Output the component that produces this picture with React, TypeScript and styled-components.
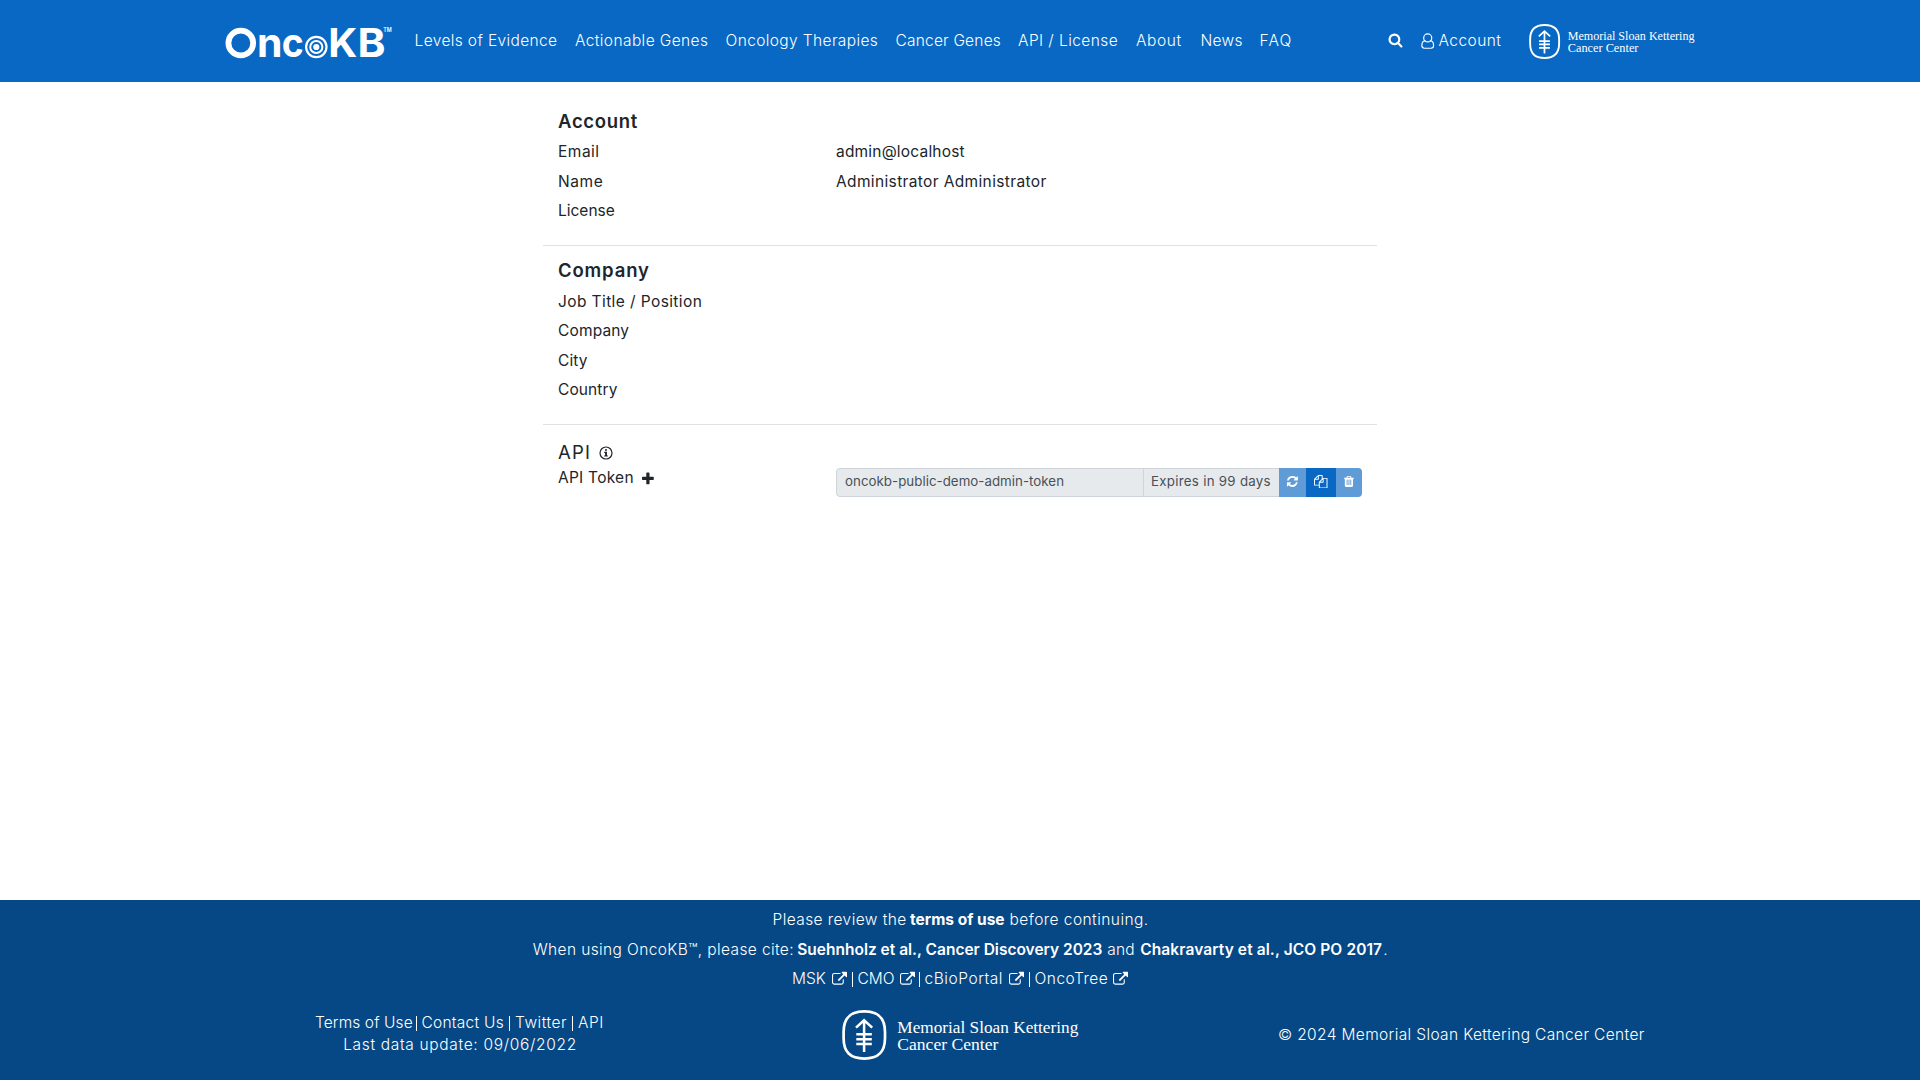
import React from 'react';
import styled, { createGlobalStyle } from 'styled-components';

const Global = createGlobalStyle`
  *, *::before, *::after { box-sizing: border-box; }
  html, body { margin: 0; padding: 0; }
  body { background: #fff; color: #212529; font: 400 15.5px/1.5 Inter, "Open Sans", sans-serif; }
  a { color: inherit; text-decoration: none; }
`;

const Page = styled.div`
  height: 1080px;
  display: flex;
  flex-direction: column;
  overflow: hidden;
`;

/* Text whose tracking and slot width vary with the label. */
const Text = styled.span<{ $w?: number; $ls?: number; $bold?: number }>`
  display: inline-block;
  white-space: nowrap;
  flex: none;
  width: ${(p) => (p.$w ? `${p.$w}px` : 'auto')};
  letter-spacing: ${(p) => p.$ls ?? 0.3}px;
  font-weight: ${(p) => p.$bold ?? 'inherit'};
`;

const Icon = styled.svg<{ $size: number }>`
  display: block;
  flex: none;
  width: ${(p) => p.$size}px;
  height: ${(p) => p.$size}px;
  fill: currentColor;
`;

/* ---------- header ---------- */
const Header = styled.header`
  height: 82px;
  flex: none;
  padding: 0 225px 0 224px;
  display: flex;
  align-items: center;
  background: #0968c3;
  color: #fff;
  font-weight: 300;
`;
const Brand = styled.svg`
  display: block;
  flex: none;
  width: 170px;
  height: 60px;
  margin-right: 20.5px;
  overflow: visible;
  fill: #fff;
  font-family: Inter, sans-serif;
  font-weight: 700;
`;
const Nav = styled.nav`
  display: flex;
  flex: 1;
`;
const Tools = styled.div`
  display: flex;
  align-items: center;
  color: #fff;
`;
const AccountLink = styled.a`
  display: flex;
  align-items: center;
  gap: 1.5px;
  margin: 0 26.5px 0 18px;
`;
const MskMark = styled.svg<{ $width: number }>`
  display: block;
  flex: none;
  width: ${(p) => p.$width}px;
  height: ${(p) => (p.$width * 50) / 237}px;
  overflow: visible;
  font-family: "Liberation Serif", serif;
  fill: #fff;
  ${Tools} & { margin-top: 1px; }
`;

/* ---------- account page ---------- */
const Main = styled.main`
  flex: 1;
  width: 834px;
  margin: 0 auto;
`;
const Section = styled.section<{ $h: number; $top: number }>`
  height: ${(p) => p.$h}px;
  padding: ${(p) => p.$top}px 15px 0;
  border-bottom: 1px solid #dfe1e4;
  &:last-child { border-bottom: 0; }
`;
const Heading = styled.h5<{ $h?: number; $light?: boolean }>`
  margin: 0;
  height: ${(p) => p.$h ?? 31}px;
  display: flex;
  align-items: center;
  font-size: 18.5px;
  font-weight: ${(p) => (p.$light ? 400 : 600)};
`;
const Row = styled.div`
  display: grid;
  grid-template-columns: 278px 1fr;
  align-items: center;
  height: 29.5px;
`;
const TokenRow = styled(Row)`
  align-items: start;
  height: 29px;
`;
const TokenLabel = styled.div`
  display: flex;
  align-items: center;
  gap: 7px;
  line-height: 20px;
`;
const Group = styled.div`
  display: flex;
  width: 526px;
  height: 29px;
  overflow: hidden;
  border-radius: 4px;
  font-size: 13.3px;
  color: #495057;
`;
const Field = styled.div<{ $w: number; $pad: number; $first?: boolean }>`
  flex: none;
  width: ${(p) => p.$w}px;
  padding: 0 0 ${(p) => (p.$first ? 2 : 1)}px ${(p) => p.$pad}px;
  display: flex;
  align-items: center;
  background: #e7eaed;
  border: 1px solid #ced4da;
  border-right: 0;
  border-radius: ${(p) => (p.$first ? '4px 0 0 4px' : 0)};
`;
const IconButton = styled.button<{ $w: number; $on?: boolean }>`
  flex: none;
  width: ${(p) => p.$w}px;
  padding: 0 0 2px;
  border: 0;
  display: flex;
  align-items: center;
  justify-content: center;
  color: #fff;
  background: ${(p) => (p.$on ? '#0968c3' : '#5f9bd7')};
`;

/* ---------- footer ---------- */
const Footer = styled.footer`
  flex: none;
  height: 180px;
  padding-top: 5px;
  background: #064885;
  color: #fff;
  font-weight: 300;
`;
const Line = styled.div`
  height: 29.6px;
  display: flex;
  justify-content: center;
  align-items: center;
`;
const Bar = styled.i<{ $l: number; $r: number }>`
  flex: none;
  width: 1px;
  height: 15px;
  background: #fff;
  margin: 1px ${(p) => p.$r}px 0 ${(p) => p.$l}px;
`;
const Bottom = styled.div`
  display: grid;
  grid-template-columns: 527px 436px 1fr;
  align-items: center;
  height: 50px;
  margin-top: 16px;
  padding-left: 315px;
`;
const Legal = styled.div`
  width: 290px;
  line-height: 22px;
  padding-bottom: 1px;
`;
const LegalLine = styled.div`
  display: flex;
  justify-content: center;
  align-items: center;
  height: 22px;
`;

const P = {
  search: 'M1216 832q0-185-131.5-316.5t-316.5-131.5-316.5 131.5-131.5 316.5 131.5 316.5 316.5 131.5 316.5-131.5 131.5-316.5zm512 832q0 52-38 90t-90 38q-54 0-90-38l-343-342q-179 124-399 124-143 0-273.5-55.5t-225-150-150-225-55.5-273.5 55.5-273.5 150-225 225-150 273.5-55.5 273.5 55.5 225 150 150 225 55.5 273.5q0 220-124 399l343 343q37 37 37 90z',
  link: 'M1472 992v320q0 119-84.5 203.5t-203.5 84.5h-832q-119 0-203.5-84.5t-84.5-203.5v-832q0-119 84.5-203.5t203.5-84.5h704q14 0 23 9t9 23v64q0 14-9 23t-23 9h-704q-66 0-113 47t-47 113v832q0 66 47 113t113 47h832q66 0 113-47t47-113v-320q0-14 9-23t23-9h64q14 0 23 9t9 23zm384-864v512q0 26-19 45t-45 19-45-19l-176-176-652 652q-10 10-23 10t-23-10l-114-114q-10-10-10-23t10-23l652-652-176-176q-19-19-19-45t19-45 45-19h512q26 0 45 19t19 45z',
  plus: 'M1600 736v192q0 40-28 68t-68 28h-416v416q0 40-28 68t-68 28h-192q-40 0-68-28t-28-68v-416h-416q-40 0-68-28t-28-68v-192q0-40 28-68t68-28h416v-416q0-40 28-68t68-28h192q40 0 68 28t28 68v416h416q40 0 68 28t28 68z',
  refresh: 'M1639 1056q0 5-1 7-64 268-268 434.5t-478 166.5q-146 0-282.5-55t-243.5-157l-129 129q-19 19-45 19t-45-19-19-45v-448q0-26 19-45t45-19h448q26 0 45 19t19 45-19 45l-137 137q71 66 161 102t187 36q134 0 250-65t186-179q11-17 53-117 8-23 30-23h192q13 0 22.5 9.5t9.5 22.5zm25-800v448q0 26-19 45t-45 19h-448q-26 0-45-19t-19-45 19-45l138-138q-148-137-349-137-134 0-250 65t-186 179q-11 17-53 117-8 23-30 23h-199q-13 0-22.5-9.5t-9.5-22.5v-7q65-268 270-434.5t480-166.5q146 0 284 55.5t245 156.5l130-129q19-19 45-19t45 19 19 45z',
  files: 'M1696 384q40 0 68 28t28 68v1216q0 40-28 68t-68 28h-960q-40 0-68-28t-28-68v-288h-544q-40 0-68-28t-28-68v-672q0-40 20-88t48-76l408-408q28-28 76-48t88-20h416q40 0 68 28t28 68v328q68-40 128-40h416zm-544 213l-299 299h299v-299zm-640-384l-299 299h299v-299zm196 647l316-316v-416h-384v416q0 40-28 68t-68 28h-416v640h512v-256q0-40 20-88t48-76zm956 804v-1152h-384v416q0 40-28 68t-68 28h-416v640h896z',
  trash: 'M704 1376v-704q0-14-9-23t-23-9h-64q-14 0-23 9t-9 23v704q0 14 9 23t23 9h64q14 0 23-9t9-23zm256 0v-704q0-14-9-23t-23-9h-64q-14 0-23 9t-9 23v704q0 14 9 23t23 9h64q14 0 23-9t9-23zm256 0v-704q0-14-9-23t-23-9h-64q-14 0-23 9t-9 23v704q0 14 9 23t23 9h64q14 0 23-9t9-23zm-544-992h448l-48-117q-7-9-17-11h-317q-10 2-17 11zm928 32v64q0 14-9 23t-23 9h-96v948q0 83-47 143.5t-113 60.5h-832q-66 0-113-58.5t-47-141.5v-952h-96q-14 0-23-9t-9-23v-64q0-14 9-23t23-9h309l70-167q15-37 54-63t79-26h320q40 0 79 26t54 63l70 167h309q14 0 23 9t9 23z',
};

const Glyph = ({ d, size, box = '0 0 1792 1792' }: { d: string; size: number; box?: string }) => (
  <Icon $size={size} viewBox={box}><path d={d} /></Icon>
);
const External = () => <Glyph d={P.link} size={15} box="64 -32 1792 1792" />;

const UserIcon = () => (
  <Icon $size={16} viewBox="0 0 15 15">
    <path d="M4.3 7.3C2 7.3.8 9.500.8 11.800c0 1.600.9 2.500 2.400 2.500h6.200c1.500 0 2.400-.9 2.400-2.500 0-2.300-1.200-4.500-3.500-4.500" fill="none" stroke="currentColor" strokeWidth="1.1" />
    <circle cx="6.300" cy="4.600" r="3.800" fill="none" stroke="currentColor" strokeWidth="1.1" />
  </Icon>
);
const InfoIcon = () => (
  <Icon $size={14} viewBox="0 0 14 14">
    <circle cx="7" cy="7" r="6" fill="none" stroke="currentColor" strokeWidth="1.2" />
    <path d="M6 3.2h2v1.6H6zM5.2 5.800H8v3.700h.9v1.100H5.200V9.500h.9V6.900h-.9z" />
  </Icon>
);
const Msk = ({ width }: { width: number }) => (
  <MskMark $width={width} viewBox="0 0 237 50">
    <path d="M22.3 1.4C36.5 1.4 43 8 43 22v6c0 14-6.500 20.600-20.700 20.600S1.600 42 1.600 28v-6C1.600 8 8.100 1.400 22.300 1.400z" fill="none" stroke="#fff" strokeWidth="2.7" />
    <path d="M22.100 42V10.500M14 17.700l8.100-7.400 8.100 7.400M14.300 24.300h15.500M14.300 29.200h15.500M14.300 34.100h15.500" fill="none" stroke="#fff" strokeWidth="2.5" />
    <text x="55.300" y="22.600" fontSize="17.700" textLength="181" lengthAdjust="spacingAndGlyphs">Memorial Sloan Kettering</text>
    <text x="55.300" y="39.700" fontSize="17.700" textLength="101" lengthAdjust="spacingAndGlyphs">Cancer Center</text>
  </MskMark>
);

const NAV: [string, number, number][] = [
  ['Levels of Evidence', 160.5, 0.38],
  ['Actionable Genes', 150.5, 0.4],
  ['Oncology Therapies', 170, 0.38],
  ['Cancer Genes', 122.5, 0.2],
  ['API / License', 118, 0.44],
  ['About', 64.5, 0.6],
  ['News', 59, 0.3],
  ['FAQ', 40, 1.2],
];
const ACCOUNT: [string, number, string, number][] = [
  ['Email', 0.5, 'admin@localhost', 0.2],
  ['Name', 0.6, 'Administrator Administrator', 0.36],
  ['License', 0, '', 0],
];
const COMPANY: [string, number][] = [
  ['Job Title / Position', 0.4],
  ['Company', 0.15],
  ['City', 0.1],
  ['Country', 0.1],
];

export default function App() {
  return (
    <Page>
      <Global />
      <Header>
        <Brand viewBox="0 -12 170 60">
          <circle cx="16.800" cy="20" r="12.400" fill="none" stroke="#fff" strokeWidth="5.800" />
          <text x="33" y="34.300" fontSize="40.500" textLength="25.500" lengthAdjust="spacingAndGlyphs">n</text>
          <text x="57.800" y="34.300" fontSize="40.500" textLength="22" lengthAdjust="spacingAndGlyphs">c</text>
          <g fill="none" stroke="#fff">
            <circle cx="92.300" cy="24" r="10.200" strokeWidth="2.200" />
            <circle cx="92.300" cy="24" r="6.100" strokeWidth="2" />
          </g>
          <circle cx="92.300" cy="24" r="3.100" />
          <text x="104.200" y="34.300" fontSize="39.500" textLength="29" lengthAdjust="spacingAndGlyphs">K</text>
          <text x="133.500" y="34.300" fontSize="39.500" textLength="28" lengthAdjust="spacingAndGlyphs">B</text>
          <text x="159.300" y="9.300" fontSize="5.500" fontWeight="600" textLength="8.500" lengthAdjust="spacingAndGlyphs">TM</text>
        </Brand>
        <Nav>
          {NAV.map(([label, w, ls]) => (
            <a key={label} href="#"><Text $w={w} $ls={ls}>{label}</Text></a>
          ))}
        </Nav>
        <Tools>
          <Glyph d={P.search} size={15} box="0 64 1792 1792" />
          <AccountLink href="#"><UserIcon /><Text $ls={0.45} $w={64}>Account</Text></AccountLink>
          <Msk width={166} />
        </Tools>
      </Header>

      <Main>
        <Section $h={164} $top={24}>
          <Heading><Text $ls={0.7}>Account</Text></Heading>
          {ACCOUNT.map(([k, ls, v, vls]) => (
            <Row key={k}><Text $ls={ls}>{k}</Text><Text $ls={vls}>{v}</Text></Row>
          ))}
        </Section>
        <Section $h={179} $top={9.5}>
          <Heading><Text $ls={0.85}>Company</Text></Heading>
          {COMPANY.map(([k, ls]) => (
            <Row key={k}><Text $ls={ls}>{k}</Text></Row>
          ))}
        </Section>
        <Section $h={90} $top={13}>
          <Heading $light $h={30}><Text $w={41} $ls={1.2}>API</Text><InfoIcon /></Heading>
          <TokenRow>
            <TokenLabel><Text $w={77} $ls={0.25}>API Token</Text><Glyph d={P.plus} size={15} box="192 -60 1792 1792" /></TokenLabel>
            <Group>
              <Field $w={307} $pad={8} $first><Text $ls={0.03}>oncokb-public-demo-admin-token</Text></Field>
              <Field $w={136} $pad={7}><Text $ls={0.28}>Expires in 99 days</Text></Field>
              <IconButton $w={27}><Glyph d={P.refresh} size={12.8} /></IconButton>
              <IconButton $w={30} $on><Glyph d={P.files} size={13.5} /></IconButton>
              <IconButton $w={26}><Glyph d={P.trash} size={12.8} box="64 0 1792 1792" /></IconButton>
            </Group>
          </TokenRow>
        </Section>
      </Main>

      <Footer>
        <Line>
          <Text $w={137.5} $ls={0.42}>Please review the</Text>
          <Text $w={99.5} $ls={0} $bold={700}>terms of use</Text>
          <Text $w={138} $ls={0.45}>before continuing.</Text>
        </Line>
        <Line>
          <Text $w={264.5} $ls={0.38}>When using OncoKB™, please cite:</Text>
          <Text $w={310} $ls={0} $bold={600}>Suehnholz et al., Cancer Discovery 2023</Text>
          <Text $w={33} $ls={0.2}>and</Text>
          <Text $w={243} $ls={0.1} $bold={600}>Chakravarty et al., JCO PO 2017</Text>
          <Text $w={4}>.</Text>
        </Line>
        <Line>
          <Text $w={39.5} $ls={0}>MSK</Text><External /><Bar $l={5} $r={5} />
          <Text $w={42} $ls={0}>CMO</Text><External /><Bar $l={4} $r={5} />
          <Text $w={84} $ls={0.55}>cBioPortal</Text><External /><Bar $l={5} $r={5} />
          <Text $w={78.5} $ls={0.5}>OncoTree</Text><External />
        </Line>
        <Bottom>
          <Legal>
            <LegalLine>
              <Text $w={97.5} $ls={0.1}>Terms of Use</Text><Bar $l={3} $r={5} />
              <Text $w={83.5} $ls={0.25}>Contact Us</Text><Bar $l={4} $r={5} />
              <Text $w={53} $ls={0.5}>Twitter</Text><Bar $l={4} $r={5} />
              <Text $w={27} $ls={0.5}>API</Text>
            </LegalLine>
            <LegalLine><Text $ls={0.67}>Last data update: 09/06/2022</Text></LegalLine>
          </Legal>
          <Msk width={237} />
          <Text $ls={0.36}>© 2024 Memorial Sloan Kettering Cancer Center</Text>
        </Bottom>
      </Footer>
    </Page>
  );
}
